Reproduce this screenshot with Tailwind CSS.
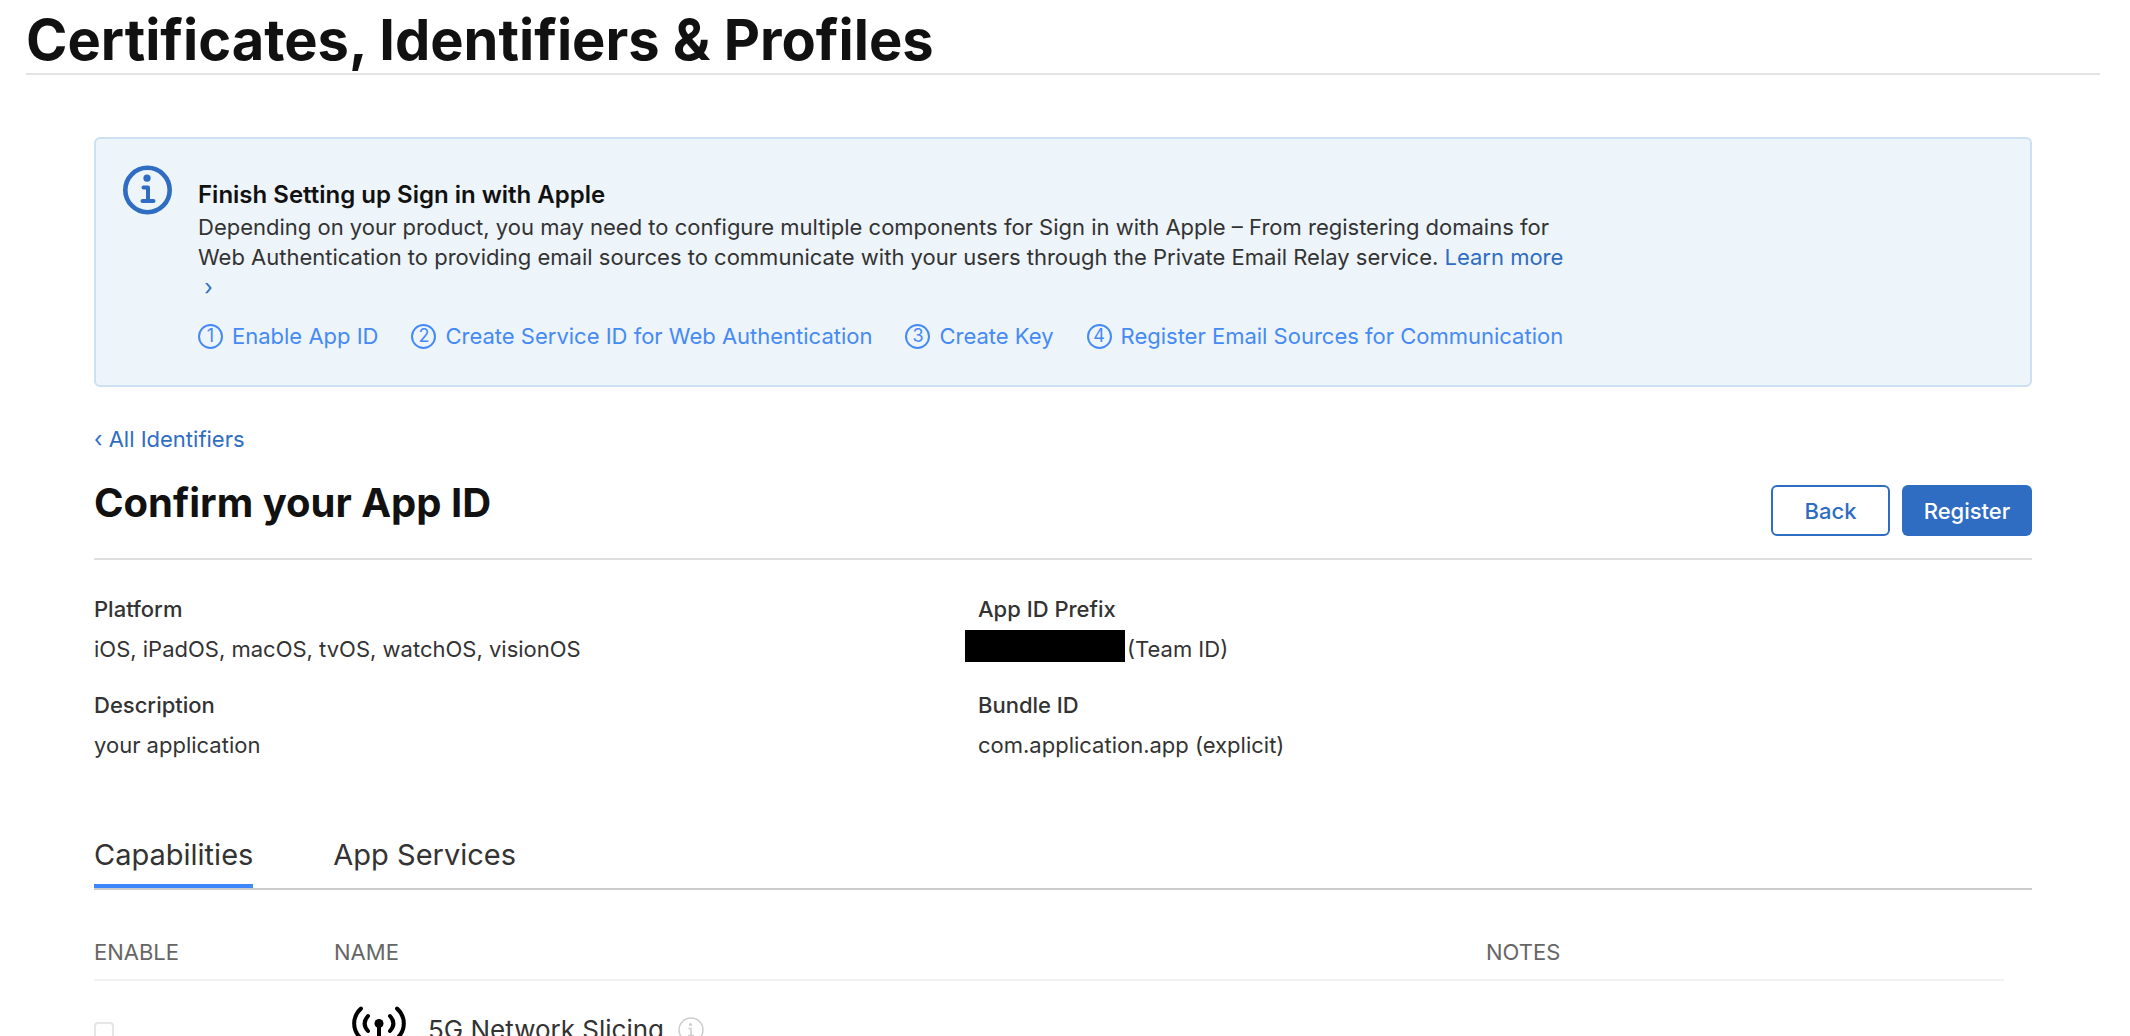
<!DOCTYPE html>
<html lang="en">
<head>
    <meta charset="UTF-8">
    <meta name="viewport" content="width=device-width, initial-scale=1.0">
    <title>Certificates, Identifiers &amp; Profiles</title>
    <script src="https://cdn.jsdelivr.net/npm/@tailwindcss/browser@4"></script>
</head>
<body class="h-screen overflow-hidden bg-white font-[Inter,sans-serif] text-[22px] leading-[30px] text-[#333333]">
    <header class="ml-[26px] mr-[30px] border-b-2 border-[#e3e3e3] pt-2">
        <h1 class="text-[56px] leading-[65px] font-bold text-[#111111]">Certificates, Identifiers &amp; Profiles</h1>
    </header>

    <main class="ml-[94px] mr-[98px] pt-[62px]">
        <section class="flex gap-[26px] rounded-md border-2 border-[#cde0f1] bg-[#edf4fa] px-[26px] pb-[34px] pt-[26px]">
            <svg class="size-[50px] shrink-0" viewBox="0 0 50 50" fill="none" stroke="#2f6dc3">
                <circle cx="25.5" cy="25" r="22.2" stroke-width="4.6" />
                <circle cx="25" cy="13.2" r="3.6" fill="#2f6dc3" stroke="none" />
                <path d="M21.500 22.500h4.500v13.500M20.500 36h11" stroke-width="4" stroke-linecap="round" stroke-linejoin="round" />
            </svg>
            <div class="pt-[13px]">
                <h2 class="text-[24px] leading-[34px] font-semibold text-[#111111]">Finish Setting up Sign in with Apple</h2>
                <p class="max-w-[1372px]">Depending on your product, you may need to configure multiple components for Sign in with Apple – From registering domains for Web Authentication to providing email sources to communicate with your users through the Private Email Relay service. <a href="#" class="text-[#2f6dc3]">Learn more<br>&nbsp;›</a></p>
                <ol class="mt-[19px] flex gap-[33px] text-[#458af5]">
                    <li><a href="#" class="flex items-center gap-[9px]"><span class="flex size-[25px] items-center justify-center rounded-full border-2 border-[#458af5] text-[18px]">1</span>Enable App ID</a></li>
                    <li><a href="#" class="flex items-center gap-[9px]"><span class="flex size-[25px] items-center justify-center rounded-full border-2 border-[#458af5] text-[18px]">2</span>Create Service ID for Web Authentication</a></li>
                    <li><a href="#" class="flex items-center gap-[9px]"><span class="flex size-[25px] items-center justify-center rounded-full border-2 border-[#458af5] text-[18px]">3</span>Create Key</a></li>
                    <li><a href="#" class="flex items-center gap-[9px]"><span class="flex size-[25px] items-center justify-center rounded-full border-2 border-[#458af5] text-[18px]">4</span>Register Email Sources for Communication</a></li>
                </ol>
            </div>
        </section>

        <a href="#" class="mt-[37px] block text-[#2f6dc3]">‹ All Identifiers</a>

        <div class="mt-[24px] flex justify-between border-b-2 border-[#dedede] pb-[22px]">
            <h2 class="text-[40px] leading-[50px] font-bold text-[#111111]">Confirm your App ID</h2>
            <div class="flex gap-3 pt-[7px] font-medium">
                <button type="button" class="h-[51px] w-[119px] rounded-md border-2 border-[#2f6dc3] text-[#2f6dc3]">Back</button>
                <button type="button" class="h-[51px] w-[130px] rounded-md bg-[#2f6dc3] text-white">Register</button>
            </div>
        </div>

        <dl class="mt-[34px] grid grid-cols-[884fr_1054fr] gap-y-[26px]">
            <div>
                <dt class="font-medium">Platform</dt>
                <dd class="mt-[10px]">iOS, iPadOS, macOS, tvOS, watchOS, visionOS</dd>
            </div>
            <div>
                <dt class="font-medium">App ID Prefix</dt>
                <dd class="-ml-[13px] mt-[10px] flex gap-[2px]"><span class="-mt-1 h-8 w-[160px] bg-black"></span>(Team ID)</dd>
            </div>
            <div>
                <dt class="font-medium">Description</dt>
                <dd class="mt-[10px]">your application</dd>
            </div>
            <div>
                <dt class="font-medium">Bundle ID</dt>
                <dd class="mt-[10px]">com.application.app (explicit)</dd>
            </div>
        </dl>

        <nav class="mt-[76px] flex gap-20 border-b-2 border-[#cccccc] text-[29px] leading-[38px]">
            <a href="#" class="border-b-4 border-[#3d87fb] pb-[10px]">Capabilities</a>
            <a href="#">App Services</a>
        </nav>

        <div class="mr-7">
            <table class="mt-[47px] w-full table-fixed text-left">
                <thead>
                    <tr class="border-b-2 border-[#f2f2f2] text-[#666666]">
                        <th class="w-[240px] pb-3 font-normal">ENABLE</th>
                        <th class="pb-3 font-normal">NAME</th>
                        <th class="w-[518px] pb-3 font-normal">NOTES</th>
                    </tr>
                </thead>
                <tbody>
                    <tr class="align-top">
                        <td class="pt-[41px]"><input type="checkbox" aria-label="Enable 5G Network Slicing" class="block size-5 appearance-none rounded-sm border-2 border-[#e6e6e6] bg-white"></td>
                        <td class="pl-4 pt-6">
                            <div class="flex items-center">
                                <svg class="mr-5 h-[50px] w-[58px]" viewBox="0 0 58 50" fill="none" stroke="#000000" stroke-linecap="round" stroke-width="4">
                                    <path d="M11 3.500C1.900 12 1.900 25 11 33.500M47 3.500c9.100 8.500 9.100 21.500 0 30M18 11c-4.500 5-4.500 10 0 15M40 11c4.500 5 4.500 10 0 15" />
                                    <circle cx="29" cy="18.500" r="4.500" fill="#000000" stroke="none" />
                                    <path d="M29 19v27" stroke-width="4" />
                                </svg>
                                <span class="text-[26px]">5G Network Slicing</span>
                                <svg class="ml-[14px] size-[26px]" viewBox="0 0 26 26" fill="none" stroke="#cccccc" stroke-width="1.500">
                                    <circle cx="13" cy="13" r="12" />
                                    <circle cx="12.500" cy="7.500" r="1.500" fill="#cccccc" stroke="none" />
                                    <path d="M10.500 11.500h2.500v7M10 18.500h6" />
                                </svg>
                            </div>
                        </td>
                        <td></td>
                    </tr>
                </tbody>
            </table>
        </div>
    </main>
</body>
</html>
